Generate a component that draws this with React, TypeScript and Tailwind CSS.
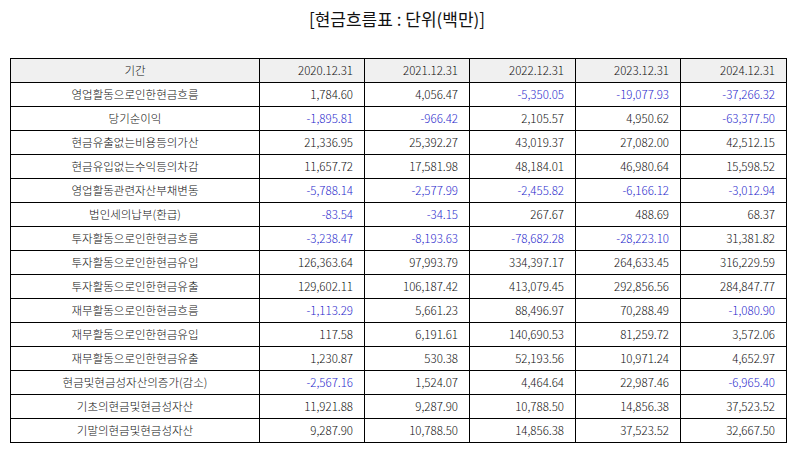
import React from "react";

const rows: [string, string[]][] = [
  ["영업활동으로인한현금흐름", ["1,784.60", "4,056.47", "-5,350.05", "-19,077.93", "-37,266.32"]],
  ["당기순이익", ["-1,895.81", "-966.42", "2,105.57", "4,950.62", "-63,377.50"]],
  ["현금유출없는비용등의가산", ["21,336.95", "25,392.27", "43,019.37", "27,082.00", "42,512.15"]],
  ["현금유입없는수익등의차감", ["11,657.72", "17,581.98", "48,184.01", "46,980.64", "15,598.52"]],
  ["영업활동관련자산부채변동", ["-5,788.14", "-2,577.99", "-2,455.82", "-6,166.12", "-3,012.94"]],
  ["법인세의납부(환급)", ["-83.54", "-34.15", "267.67", "488.69", "68.37"]],
  ["투자활동으로인한현금흐름", ["-3,238.47", "-8,193.63", "-78,682.28", "-28,223.10", "31,381.82"]],
  ["투자활동으로인한현금유입", ["126,363.64", "97,993.79", "334,397.17", "264,633.45", "316,229.59"]],
  ["투자활동으로인한현금유출", ["129,602.11", "106,187.42", "413,079.45", "292,856.56", "284,847.77"]],
  ["재무활동으로인한현금흐름", ["-1,113.29", "5,661.23", "88,496.97", "70,288.49", "-1,080.90"]],
  ["재무활동으로인한현금유입", ["117.58", "6,191.61", "140,690.53", "81,259.72", "3,572.06"]],
  ["재무활동으로인한현금유출", ["1,230.87", "530.38", "52,193.56", "10,971.24", "4,652.97"]],
  ["현금및현금성자산의증가(감소)", ["-2,567.16", "1,524.07", "4,464.64", "22,987.46", "-6,965.40"]],
  ["기초의현금및현금성자산", ["11,921.88", "9,287.90", "10,788.50", "14,856.38", "37,523.52"]],
  ["기말의현금및현금성자산", ["9,287.90", "10,788.50", "14,856.38", "37,523.52", "32,667.50"]],
];

const years = ["2020.12.31", "2021.12.31", "2022.12.31", "2023.12.31", "2024.12.31"];

export default function App() {
  return (
    <div className="w-[794px] h-[452px] bg-white text-[#111] font-['Noto_Sans_CJK_KR','Noto_Sans',sans-serif] font-light pt-[6px] pl-[10px]">
      <div className="text-center text-[17px] leading-[26px] pr-[10px] text-[#111] font-normal">[현금흐름표 : 단위(백만)]</div>
      <table className="mt-[26px] w-[776px] table-fixed border-collapse text-[11.5px] leading-none">
        <colgroup>
          <col className="w-[249px]" />
          <col className="w-[105px]" />
          <col className="w-[105px]" />
          <col className="w-[106px]" />
          <col className="w-[105px]" />
          <col className="w-[106px]" />
        </colgroup>
        <thead>
          <tr className="h-[24px] bg-[#f0f0f0]">
            <th className="border border-black font-light text-center">기간</th>
            {years.map((y) => (
              <th key={y} className="border border-black font-light text-right pr-[11px] text-[11.5px]">
                {y}
              </th>
            ))}
          </tr>
        </thead>
        <tbody>
          {rows.map(([label, vals]) => (
            <tr key={label} className="h-[24px]">
              <td className="border border-black text-center">{label}</td>
              {vals.map((v, i) => (
                <td
                  key={i}
                  className={`border border-black text-right pr-[11px] text-[11.5px] ${v.startsWith("-") ? "text-[#2a2acc]" : ""}`}
                >
                  {v}
                </td>
              ))}
            </tr>
          ))}
        </tbody>
      </table>
    </div>
  );
}
